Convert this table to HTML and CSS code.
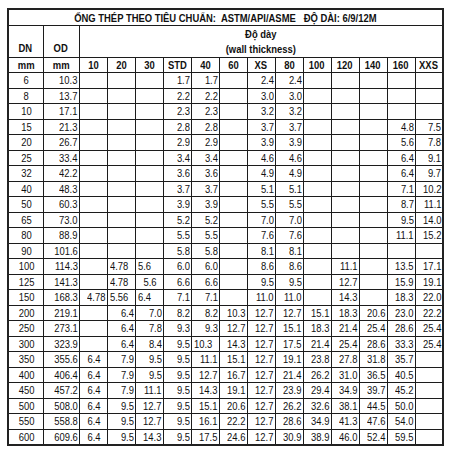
FILE: index.html
```html
<!DOCTYPE html>
<html lang="vi">
<head>
<meta charset="utf-8">
<title>Ống thép theo tiêu chuẩn</title>
<link rel="stylesheet" href="styles.css">
</head>
<body>
<table class="pipe">
<colgroup>
<col class="c-dn"><col class="c-od">
<col class="c-t"><col class="c-t"><col class="c-t"><col class="c-t"><col class="c-t"><col class="c-t"><col class="c-t"><col class="c-t"><col class="c-t"><col class="c-t"><col class="c-t"><col class="c-t"><col class="c-t">
</colgroup>
<thead>
<tr class="r-title"><th colspan="15"><span>ỐNG THÉP THEO TIÊU CHUẨN:&nbsp; ASTM/API/ASME &nbsp;&nbsp;ĐỘ DÀI: 6/9/12M</span></th></tr>
<tr class="r-head"><th class="bottom"><span>DN</span></th><th class="bottom"><span>OD</span></th><th colspan="13"><span>Độ dày<br>(wall thickness)</span></th></tr>
<tr class="r-unit"><th><span>mm</span></th><th><span>mm</span></th><th><span>10</span></th><th><span>20</span></th><th><span>30</span></th><th><span>STD</span></th><th><span>40</span></th><th><span>60</span></th><th><span>XS</span></th><th><span>80</span></th><th><span>100</span></th><th><span>120</span></th><th><span>140</span></th><th><span>160</span></th><th><span>XXS</span></th></tr>
</thead>
<tbody>
<tr><td class="dn"><span>6</span></td><td><span>10.3</span></td><td></td><td></td><td></td><td><span>1.7</span></td><td><span>1.7</span></td><td></td><td><span>2.4</span></td><td><span>2.4</span></td><td></td><td></td><td></td><td></td><td></td></tr>
<tr><td class="dn"><span>8</span></td><td><span>13.7</span></td><td></td><td></td><td></td><td><span>2.2</span></td><td><span>2.2</span></td><td></td><td><span>3.0</span></td><td><span>3.0</span></td><td></td><td></td><td></td><td></td><td></td></tr>
<tr><td class="dn"><span>10</span></td><td><span>17.1</span></td><td></td><td></td><td></td><td><span>2.3</span></td><td><span>2.3</span></td><td></td><td><span>3.2</span></td><td><span>3.2</span></td><td></td><td></td><td></td><td></td><td></td></tr>
<tr><td class="dn"><span>15</span></td><td><span>21.3</span></td><td></td><td></td><td></td><td><span>2.8</span></td><td><span>2.8</span></td><td></td><td><span>3.7</span></td><td><span>3.7</span></td><td></td><td></td><td></td><td><span>4.8</span></td><td><span>7.5</span></td></tr>
<tr><td class="dn"><span>20</span></td><td><span>26.7</span></td><td></td><td></td><td></td><td><span>2.9</span></td><td><span>2.9</span></td><td></td><td><span>3.9</span></td><td><span>3.9</span></td><td></td><td></td><td></td><td><span>5.6</span></td><td><span>7.8</span></td></tr>
<tr><td class="dn"><span>25</span></td><td><span>33.4</span></td><td></td><td></td><td></td><td><span>3.4</span></td><td><span>3.4</span></td><td></td><td><span>4.6</span></td><td><span>4.6</span></td><td></td><td></td><td></td><td><span>6.4</span></td><td><span>9.1</span></td></tr>
<tr><td class="dn"><span>32</span></td><td><span>42.2</span></td><td></td><td></td><td></td><td><span>3.6</span></td><td><span>3.6</span></td><td></td><td><span>4.9</span></td><td><span>4.9</span></td><td></td><td></td><td></td><td><span>6.4</span></td><td><span>9.7</span></td></tr>
<tr><td class="dn"><span>40</span></td><td><span>48.3</span></td><td></td><td></td><td></td><td><span>3.7</span></td><td><span>3.7</span></td><td></td><td><span>5.1</span></td><td><span>5.1</span></td><td></td><td></td><td></td><td><span>7.1</span></td><td><span>10.2</span></td></tr>
<tr><td class="dn"><span>50</span></td><td><span>60.3</span></td><td></td><td></td><td></td><td><span>3.9</span></td><td><span>3.9</span></td><td></td><td><span>5.5</span></td><td><span>5.5</span></td><td></td><td></td><td></td><td><span>8.7</span></td><td><span>11.1</span></td></tr>
<tr><td class="dn"><span>65</span></td><td><span>73.0</span></td><td></td><td></td><td></td><td><span>5.2</span></td><td><span>5.2</span></td><td></td><td><span>7.0</span></td><td><span>7.0</span></td><td></td><td></td><td></td><td><span>9.5</span></td><td><span>14.0</span></td></tr>
<tr><td class="dn"><span>80</span></td><td><span>88.9</span></td><td></td><td></td><td></td><td><span>5.5</span></td><td><span>5.5</span></td><td></td><td><span>7.6</span></td><td><span>7.6</span></td><td></td><td></td><td></td><td><span>11.1</span></td><td><span>15.2</span></td></tr>
<tr><td class="dn"><span>90</span></td><td><span>101.6</span></td><td></td><td></td><td></td><td><span>5.8</span></td><td><span>5.8</span></td><td></td><td><span>8.1</span></td><td><span>8.1</span></td><td></td><td></td><td></td><td></td><td></td></tr>
<tr><td class="dn"><span>100</span></td><td><span>114.3</span></td><td></td><td class="l"><span>4.78</span></td><td class="l"><span>5.6</span></td><td><span>6.0</span></td><td><span>6.0</span></td><td></td><td><span>8.6</span></td><td><span>8.6</span></td><td></td><td><span>11.1</span></td><td></td><td><span>13.5</span></td><td><span>17.1</span></td></tr>
<tr><td class="dn"><span>125</span></td><td><span>141.3</span></td><td></td><td class="l"><span>4.78</span></td><td class="c"><span>5.6</span></td><td><span>6.6</span></td><td><span>6.6</span></td><td></td><td><span>9.5</span></td><td><span>9.5</span></td><td></td><td><span>12.7</span></td><td></td><td><span>15.9</span></td><td><span>19.1</span></td></tr>
<tr><td class="dn"><span>150</span></td><td><span>168.3</span></td><td><span>4.78</span></td><td class="l"><span>5.56</span></td><td class="l"><span>6.4</span></td><td><span>7.1</span></td><td><span>7.1</span></td><td></td><td><span>11.0</span></td><td><span>11.0</span></td><td></td><td><span>14.3</span></td><td></td><td><span>18.3</span></td><td><span>22.0</span></td></tr>
<tr><td class="dn"><span>200</span></td><td><span>219.1</span></td><td></td><td><span>6.4</span></td><td><span>7.0</span></td><td><span>8.2</span></td><td><span>8.2</span></td><td><span>10.3</span></td><td><span>12.7</span></td><td><span>12.7</span></td><td><span>15.1</span></td><td><span>18.3</span></td><td><span>20.6</span></td><td><span>23.0</span></td><td><span>22.2</span></td></tr>
<tr><td class="dn"><span>250</span></td><td><span>273.1</span></td><td></td><td><span>6.4</span></td><td><span>7.8</span></td><td><span>9.3</span></td><td><span>9.3</span></td><td><span>12.7</span></td><td><span>12.7</span></td><td><span>15.1</span></td><td><span>18.3</span></td><td><span>21.4</span></td><td><span>25.4</span></td><td><span>28.6</span></td><td><span>25.4</span></td></tr>
<tr><td class="dn"><span>300</span></td><td><span>323.9</span></td><td></td><td><span>6.4</span></td><td><span>8.4</span></td><td><span>9.5</span></td><td class="l"><span>10.3</span></td><td><span>14.3</span></td><td><span>12.7</span></td><td><span>17.5</span></td><td><span>21.4</span></td><td><span>25.4</span></td><td><span>28.6</span></td><td><span>33.3</span></td><td><span>25.4</span></td></tr>
<tr><td class="dn"><span>350</span></td><td><span>355.6</span></td><td class="c"><span>6.4</span></td><td><span>7.9</span></td><td><span>9.5</span></td><td><span>9.5</span></td><td><span>11.1</span></td><td><span>15.1</span></td><td><span>12.7</span></td><td><span>19.1</span></td><td><span>23.8</span></td><td><span>27.8</span></td><td><span>31.8</span></td><td><span>35.7</span></td><td></td></tr>
<tr><td class="dn"><span>400</span></td><td><span>406.4</span></td><td class="c"><span>6.4</span></td><td><span>7.9</span></td><td><span>9.5</span></td><td><span>9.5</span></td><td><span>12.7</span></td><td><span>16.7</span></td><td><span>12.7</span></td><td><span>21.4</span></td><td><span>26.2</span></td><td><span>31.0</span></td><td><span>36.5</span></td><td><span>40.5</span></td><td></td></tr>
<tr><td class="dn"><span>450</span></td><td><span>457.2</span></td><td class="c"><span>6.4</span></td><td><span>7.9</span></td><td><span>11.1</span></td><td><span>9.5</span></td><td><span>14.3</span></td><td><span>19.1</span></td><td><span>12.7</span></td><td><span>23.9</span></td><td><span>29.4</span></td><td><span>34.9</span></td><td><span>39.7</span></td><td><span>45.2</span></td><td></td></tr>
<tr><td class="dn"><span>500</span></td><td><span>508.0</span></td><td class="c"><span>6.4</span></td><td><span>9.5</span></td><td><span>12.7</span></td><td><span>9.5</span></td><td><span>15.1</span></td><td><span>20.6</span></td><td><span>12.7</span></td><td><span>26.2</span></td><td><span>32.6</span></td><td><span>38.1</span></td><td><span>44.5</span></td><td><span>50.0</span></td><td></td></tr>
<tr><td class="dn"><span>550</span></td><td><span>558.8</span></td><td class="c"><span>6.4</span></td><td><span>9.5</span></td><td><span>12.7</span></td><td><span>9.5</span></td><td><span>16.1</span></td><td><span>22.2</span></td><td><span>12.7</span></td><td><span>28.6</span></td><td><span>34.9</span></td><td><span>41.3</span></td><td><span>47.6</span></td><td><span>54.0</span></td><td></td></tr>
<tr><td class="dn"><span>600</span></td><td><span>609.6</span></td><td class="c"><span>6.4</span></td><td><span>9.5</span></td><td><span>14.3</span></td><td><span>9.5</span></td><td><span>17.5</span></td><td><span>24.6</span></td><td><span>12.7</span></td><td><span>30.9</span></td><td><span>38.9</span></td><td><span>46.0</span></td><td><span>52.4</span></td><td><span>59.5</span></td><td></td></tr>
</tbody>
</table>
</body>
</html>
```

FILE: styles.css
```css
html, body {
  margin: 0;
  padding: 0;
  background: #ffffff;
}

body {
  padding: 8px 0 0 7px;
  font-family: "Liberation Sans", Arial, sans-serif;
  color: #111111;
}

.pipe {
  border-collapse: collapse;
  table-layout: fixed;
  width: 435px;
  font-size: 11.5px;
  border: 2px solid #222222;
}

.c-dn { width: 35px; }
.c-od { width: 36px; }
.c-t { width: 28px; }

.pipe th,
.pipe td {
  border: 1px solid #1c1c1c;
  padding: 0 1px;
  overflow: visible;
  white-space: nowrap;
  line-height: 14px;
}

/* narrow (condensed) glyphs, like Arial Narrow */
.pipe span {
  display: inline-block;
  transform: scaleX(0.82);
  transform-origin: right center;
}

.pipe th {
  font-weight: bold;
  text-align: center;
}

.pipe th span {
  transform-origin: center center;
}

.r-title th {
  height: 15px;
  font-size: 11.5px;
  padding: 0;
}

.r-head th {
  height: 30px;
  line-height: 15px;
}

.r-head th.bottom {
  vertical-align: bottom;
  padding-bottom: 1px;
}

.r-unit th {
  height: 14px;
  padding: 0;
}

.pipe tbody tr {
  height: 15.5px;
}

.pipe td {
  text-align: right;
  padding: 0 1px 0 2px;
}

.pipe td.dn {
  text-align: center;
}

.pipe td.dn span,
.pipe td.c span {
  transform-origin: center center;
}

.pipe td.c {
  text-align: center;
}

.pipe td.l {
  text-align: left;
}

.pipe td.l span {
  transform-origin: left center;
}
```
